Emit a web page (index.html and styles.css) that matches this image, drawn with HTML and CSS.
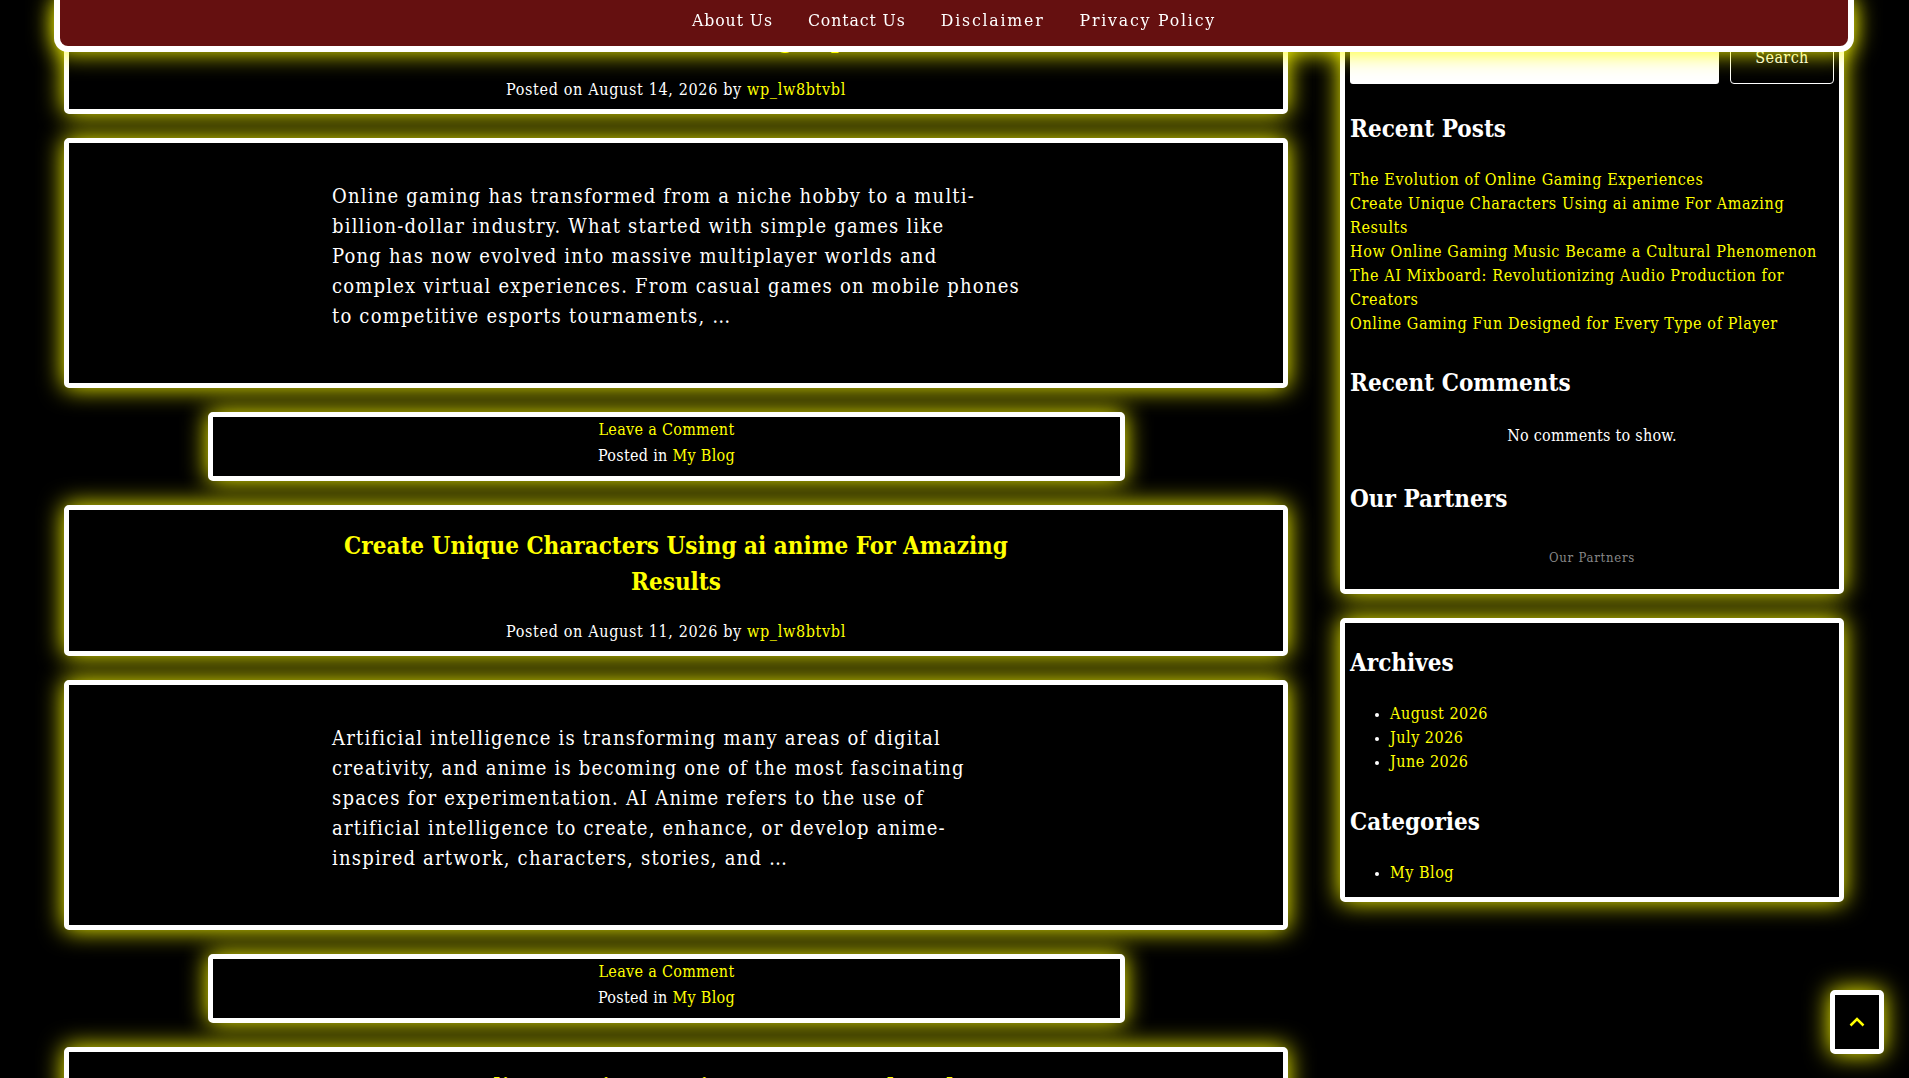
FILE: index.html
```html
<!DOCTYPE html>
<html lang="en">
<head>
  <meta charset="UTF-8" />
  <title>My Blog</title>
  <link rel="stylesheet" href="styles.css">
</head>
<body>
  <!-- Top menu -->
  <header class="site-header">
    <nav class="top-nav">
      <a href="#">About Us</a>
      <a href="#">Contact Us</a>
      <a href="#">Disclaimer</a>
      <a href="#">Privacy Policy</a>
    </nav>
  </header>

  <div class="page">
    <!-- Posts -->
    <main class="posts">
      <article class="post">
        <div class="card post-head">
          <h1 class="post-title"><a href="#">The Evolution of Online Gaming Experiences</a></h1>
          <p class="post-meta">Posted on August 14, 2026 by <a href="#">wp_lw8btvbl</a></p>
        </div>
        <div class="card post-body">
          <p>Online gaming has transformed from a niche hobby to a multi-<br>billion-dollar industry. What started with simple games like<br>Pong has now evolved into massive multiplayer worlds and<br>complex virtual experiences. From casual games on mobile phones<br>to competitive esports tournaments, …</p>
        </div>
        <div class="card post-foot">
          <a href="#">Leave a Comment</a><br>
          Posted in <a href="#">My Blog</a>
        </div>
      </article>

      <article class="post">
        <div class="card post-head">
          <h1 class="post-title"><a href="#">Create Unique Characters Using ai anime For Amazing Results</a></h1>
          <p class="post-meta">Posted on August 11, 2026 by <a href="#">wp_lw8btvbl</a></p>
        </div>
        <div class="card post-body">
          <p>Artificial intelligence is transforming many areas of digital<br>creativity, and anime is becoming one of the most fascinating<br>spaces for experimentation. AI Anime refers to the use of<br>artificial intelligence to create, enhance, or develop anime-<br>inspired artwork, characters, stories, and …</p>
        </div>
        <div class="card post-foot">
          <a href="#">Leave a Comment</a><br>
          Posted in <a href="#">My Blog</a>
        </div>
      </article>

      <article class="post">
        <div class="card post-head">
          <h1 class="post-title"><a href="#">How Online Gaming Music Became a Cultural Phenomenon</a></h1>
        </div>
      </article>
    </main>

    <!-- Sidebar -->
    <aside class="sidebar">
      <section class="card widget widget-main">
        <form class="search-form">
          <input type="search" class="search-input" aria-label="Search" />
          <button type="button" class="search-btn">Search</button>
        </form>

        <h2 class="widget-title">Recent Posts</h2>
        <ul class="plain-list">
          <li><a href="#">The Evolution of Online Gaming Experiences</a></li>
          <li><a href="#">Create Unique Characters Using ai anime For Amazing Results</a></li>
          <li><a href="#">How Online Gaming Music Became a Cultural Phenomenon</a></li>
          <li><a href="#">The AI Mixboard: Revolutionizing Audio Production for Creators</a></li>
          <li><a href="#">Online Gaming Fun Designed for Every Type of Player</a></li>
        </ul>

        <h2 class="widget-title">Recent Comments</h2>
        <p class="no-comments">No comments to show.</p>

        <h2 class="widget-title">Our Partners</h2>
        <p class="partners">Our Partners</p>
      </section>

      <section class="card widget widget-second">
        <h2 class="widget-title">Archives</h2>
        <ul class="bullet-list">
          <li><a href="#">August 2026</a></li>
          <li><a href="#">July 2026</a></li>
          <li><a href="#">June 2026</a></li>
        </ul>

        <h2 class="widget-title">Categories</h2>
        <ul class="bullet-list">
          <li><a href="#">My Blog</a></li>
        </ul>
      </section>
    </aside>
  </div>

  <!-- Scroll to top -->
  <a href="#" class="to-top" aria-label="Back to top">
    <svg width="16" height="10" viewBox="0 0 16 10" fill="none" stroke="#ffff00" stroke-width="2.5">
      <path d="M1.5 8.5 L8 2 L14.5 8.5" />
    </svg>
  </a>
</body>
</html>
```

FILE: styles.css
```css
* {
  box-sizing: border-box;
  margin: 0;
  padding: 0;
}

html {
  overflow: hidden;
  height: 100%;
}

body {
  font-family: 'DejaVu Serif Condensed', 'DejaVu Serif', serif;
  font-size: 16px;
  line-height: 24px;
  background: #000;
  color: #fff;
  height: 100%;
  overflow: hidden;
}

a {
  color: #ffff00;
  text-decoration: none;
}

/* Top menu */
.site-header {
  position: fixed;
  top: 0;
  left: 54px;
  right: 55px;
  z-index: 10;
  background: #651010;
  border: 6px solid #fff;
  border-top: 0;
  border-radius: 0 0 14px 14px;
  box-shadow: 0 0 25px #ffff00;
}

.top-nav {
  display: flex;
  justify-content: center;
  gap: 35px;
  height: 46px;
  padding-top: 8px;
}

.top-nav a {
  color: #fff;
  font-size: 17.5px;
  letter-spacing: 0.9px;
}

.top-nav a:nth-child(n+3) {
  letter-spacing: 1.8px;
}

/* Layout */
.page {
  display: grid;
  grid-template-columns: 1224px 504px;
  gap: 52px;
  padding-left: 64px;
  margin-top: -1px;
}

.card {
  background: #000;
  border: 5px solid #fff;
  border-radius: 5px;
  box-shadow: 0 0 25px #ffff00;
}

/* Posts */
.post-head {
  text-align: center;
  padding: 18px 20px 6px;
}

.post-title {
  max-width: 688px;
  margin: 0 auto 19px;
  font-size: 24px;
  line-height: 36px;
  font-weight: 700;
}

.post-meta {
  line-height: 26px;
  letter-spacing: 0.65px;
}

.post-body {
  margin-top: 24px;
  padding: 38px 0 52px;
  font-size: 20px;
  line-height: 30px;
  letter-spacing: 1.2px;
}

.post-body p {
  width: 688px;
  margin: 0 auto;
  white-space: nowrap;
}

.post-foot {
  margin: 24px 163px 24px 144px;
  padding-bottom: 8px;
  text-align: center;
  line-height: 25.6px;
  letter-spacing: 0.3px;
}

/* Sidebar */
.widget {
  padding: 0 5px;
}

.widget-main {
  padding-top: 26px;
  padding-bottom: 21px;
}

.widget-second {
  margin-top: 24px;
  padding-top: 22px;
  padding-bottom: 12px;
}

.search-form {
  display: flex;
  gap: 11px;
  margin-bottom: 27px;
}

.search-input {
  width: 369px;
  height: 54px;
  background: #fff;
  border: 0;
  border-radius: 3px;
}

.search-btn {
  width: 104px;
  height: 54px;
  background: #000;
  color: #fff;
  border: 1px solid #fff;
  border-radius: 4px;
  font-family: inherit;
  font-size: 16px;
  letter-spacing: 0.4px;
}

.widget-title {
  font-size: 24px;
  line-height: 36px;
  font-weight: 700;
  margin-bottom: 21px;
}

.plain-list {
  list-style: none;
  margin-bottom: 29px;
  letter-spacing: 0.6px;
}

.no-comments {
  text-align: center;
  margin-top: 23px;
  margin-bottom: 33px;
  letter-spacing: 0.25px;
}

.partners {
  text-align: center;
  font-size: 13px;
  line-height: 20px;
  letter-spacing: 0.75px;
  color: #888;
  margin-top: 31px;
}

.bullet-list {
  padding-left: 40px;
  margin-bottom: 30px;
  letter-spacing: 0.5px;
}

.bullet-list li::marker {
  font-size: 13px;
}

.bullet-list:last-child {
  margin-bottom: 0;
}

/* Back to top */
.to-top {
  position: fixed;
  right: 25px;
  bottom: 24px;
  z-index: 5;
  display: flex;
  align-items: center;
  justify-content: center;
  width: 54px;
  height: 64px;
  background: #000;
  border: 5px solid #fff;
  border-radius: 5px;
  box-shadow: 0 0 25px #ffff00;
}
```
